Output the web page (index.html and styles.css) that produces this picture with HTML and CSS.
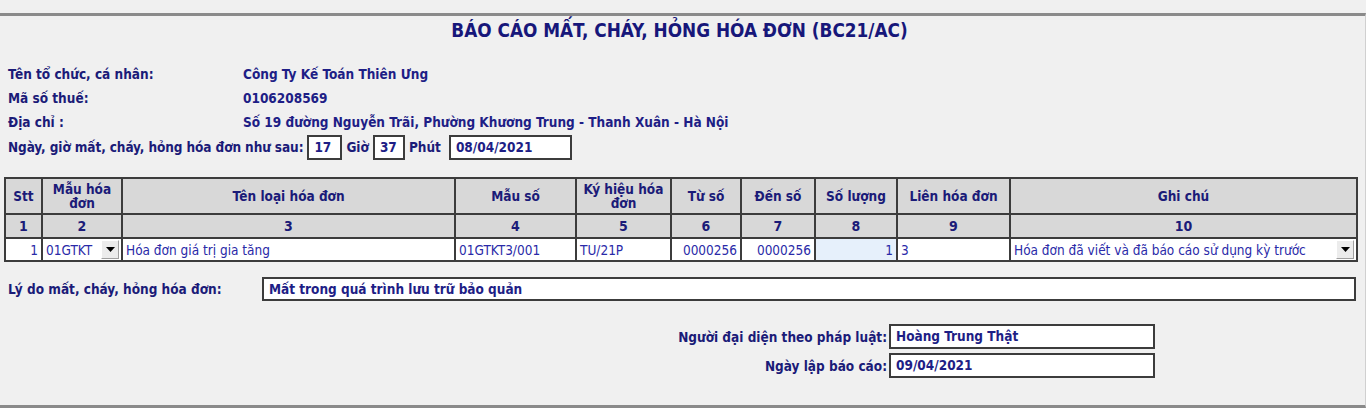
FILE: index.html
```html
<!DOCTYPE html>
<html lang="vi">
<head>
<meta charset="utf-8">
<title>BC21/AC</title>
<link rel="stylesheet" href="styles.css">
</head>
<body>
<div class="frame">
  <h1 class="title">BÁO CÁO MẤT, CHÁY, HỎNG HÓA ĐƠN (BC21/AC)</h1>

  <div class="info">
    <div class="lbl">Tên tổ chức, cá nhân:</div><div class="val">Công Ty Kế Toán Thiên Ưng</div>
    <div class="lbl">Mã số thuế:</div><div class="val">0106208569</div>
    <div class="lbl">Địa chỉ :</div><div class="val">Số 19 đường Nguyễn Trãi, Phường Khương Trung - Thanh Xuân - Hà Nội</div>
  </div>

  <div class="when">
    <span class="lbl tight">Ngày, giờ mất, cháy, hỏng hóa đơn như sau:</span>
    <span class="box box-hour">17</span>
    <span class="lbl">Giờ</span>
    <span class="box box-min">37</span>
    <span class="lbl">Phút</span>
    <span class="box box-date">08/04/2021</span>
  </div>

  <div class="grid">
    <div class="h">Stt</div>
    <div class="h">Mẫu hóa<br>đơn</div>
    <div class="h">Tên loại hóa đơn</div>
    <div class="h">Mẫu số</div>
    <div class="h">Ký hiệu hóa<br>đơn</div>
    <div class="h">Từ số</div>
    <div class="h">Đến số</div>
    <div class="h">Số lượng</div>
    <div class="h">Liên hóa đơn</div>
    <div class="h">Ghi chú</div>

    <div class="n">1</div><div class="n">2</div><div class="n">3</div><div class="n">4</div><div class="n">5</div>
    <div class="n">6</div><div class="n">7</div><div class="n">8</div><div class="n">9</div><div class="n">10</div>

    <div class="d r">1</div>
    <div class="d combo"><span>01GTKT</span><span class="drop"><svg width="9" height="5" viewBox="0 0 9 5"><path d="M0 0H9L4.5 5Z" fill="#000"/></svg></span></div>
    <div class="d">Hóa đơn giá trị gia tăng</div>
    <div class="d">01GTKT3/001</div>
    <div class="d">TU/21P</div>
    <div class="d r">0000256</div>
    <div class="d r">0000256</div>
    <div class="d r sel">1</div>
    <div class="d">3</div>
    <div class="d combo"><span>Hóa đơn đã viết và đã báo cáo sử dụng kỳ trước</span><span class="drop"><svg width="9" height="5" viewBox="0 0 9 5"><path d="M0 0H9L4.5 5Z" fill="#000"/></svg></span></div>
  </div>

  <div class="reason">
    <div class="lbl">Lý do mất, cháy, hỏng hóa đơn:</div>
    <div class="box box-wide">Mất trong quá trình lưu trữ bảo quản</div>
  </div>

  <div class="sign">
    <div class="lbl">Người đại diện theo pháp luật:</div>
    <div class="box">Hoàng Trung Thật</div>
    <div class="lbl">Ngày lập báo cáo:</div>
    <div class="box">09/04/2021</div>
  </div>
</div>
</body>
</html>
```

FILE: styles.css
```css
html, body {
  margin: 0;
  padding: 0;
  background: #f0f0f0;
}
body {
  font-family: "DejaVu Sans Condensed", "DejaVu Sans", sans-serif;
  font-stretch: condensed;
  font-size: 13.5px;
  color: #1b1b78;
}
.frame {
  margin-top: 13px;
  border-top: 3px solid #8a8a8a;
  border-bottom: 3px solid #8a8a8a;
  border-right: 1px solid #d0d0d0;
  height: 389px;
  box-sizing: content-box;
}
.title {
  margin: 0;
  height: 30px;
  line-height: 30px;
  text-align: center;
  font-size: 18.8px;
  font-weight: bold;
  color: #17177a;
  padding-right: 6px;
}
.lbl {
  font-weight: bold;
  color: #1b1b78;
  white-space: nowrap;
}
.tight { letter-spacing: -0.1px; }
.info {
  margin-top: 16px;
  display: grid;
  grid-template-columns: 235px auto;
  padding-left: 8px;
  grid-auto-rows: 24px;
  align-items: center;
}
.val {
  font-weight: bold;
  color: #1e1e86;
}
.when {
  display: flex;
  align-items: center;
  height: 26px;
  padding-left: 8px;
  gap: 4px;
}
.box {
  box-sizing: border-box;
  height: 25px;
  line-height: 21px;
  border: 2px solid #3c3c3c;
  background: #fff;
  font-weight: bold;
  color: #1e1e86;
  padding-left: 5px;
  white-space: nowrap;
}
.box-hour { width: 35px; }
.box-min { width: 32px; }
.box-date { width: 123px; margin-left: 4px; }
.grid {
  margin-top: 17px;
  margin-left: 4px;
  width: 1354px;
  box-sizing: border-box;
  display: grid;
  grid-template-columns: 35px 78px 331px 119px 93px 68px 72px 80px 111px 345px;
  grid-template-rows: 34px 22px 21px;
  gap: 2px;
  padding: 2px;
  background: #3c3c3c;
}
.h, .n {
  background: #d8d8d8;
  font-weight: bold;
  color: #1b1b78;
  text-align: center;
  display: flex;
  align-items: center;
  justify-content: center;
  line-height: 14px;
}
.n { font-size: 14px; }
.d {
  background: #fff;
  color: #2a2aa8;
  font-size: 13.5px;
  display: flex;
  align-items: center;
  padding: 0 3px;
  white-space: nowrap;
  overflow: hidden;
}
.d.r { justify-content: flex-end; }
.d.sel { background: #e6f0fb; }
.combo {
  justify-content: space-between;
  padding-right: 2px;
}
.drop {
  width: 18px;
  height: 19px;
  flex: none;
  box-sizing: border-box;
  background: #ececec;
  border: 1px solid #fff;
  border-right-color: #a0a0a0;
  border-bottom-color: #a0a0a0;
  display: flex;
  align-items: center;
  justify-content: center;
}
.reason {
  margin-top: 15px;
  display: grid;
  grid-template-columns: 254px 1094px;
  padding-left: 8px;
  align-items: center;
}
.box-wide { height: 24px; line-height: 20px; }
.sign {
  margin-top: 23px;
  display: grid;
  grid-template-columns: 889px 266px;
  row-gap: 4px;
  align-items: center;
}
.sign .lbl {
  text-align: right;
  padding-right: 2px;
}
```
